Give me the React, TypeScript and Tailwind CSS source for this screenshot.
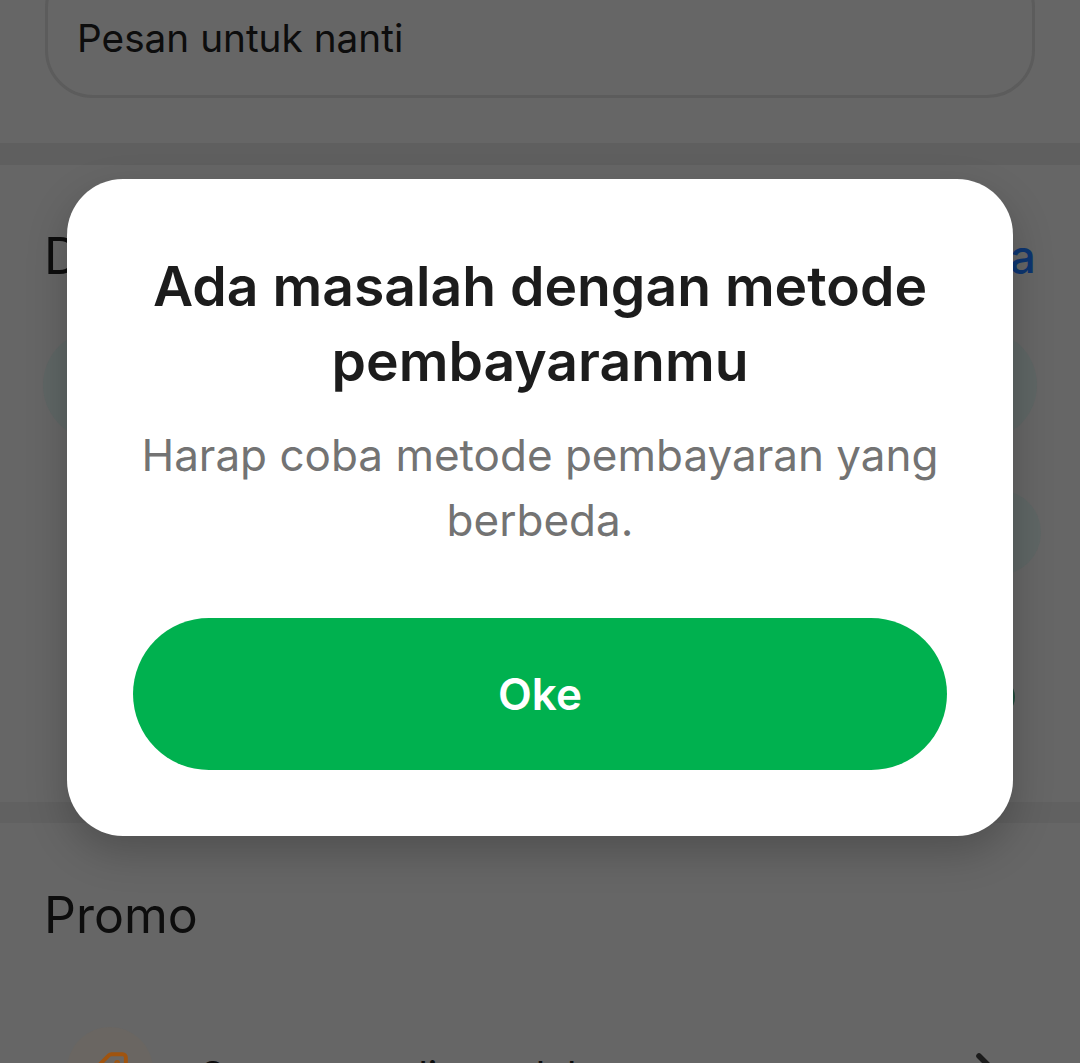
import { ChevronRight, Tag } from "lucide-react";

export default function App() {
  return (
    <div className="relative h-[1063px] w-[1080px] overflow-hidden bg-[#666666] font-['Inter',sans-serif] text-[#0d0d0d]">
      <div className="flex flex-col">
        <div className="mx-[45px] mt-[-40px] flex h-[138px] items-start rounded-[48px] border-[3px] border-[#5c5c5c] px-[29px] pt-[50px]">
          <span className="text-[38.75px] leading-[50px]">Pesan untuk nanti</span>
        </div>
        <div className="mt-[45px] h-[22px] bg-[#5f5f5f]" />
        <div className="flex items-center justify-between px-[44px] pt-[63px]">
          <span className="text-[50px] leading-[56px]">Daftar Metode</span>
          <span className="text-[46px] font-medium leading-[56px] text-[#0d3570]">Lihat semua</span>
        </div>
        <div className="mx-[43px] mt-[46px] h-[110px] rounded-[55px] bg-[#5f6665]" />
        <div className="mt-[50px] flex h-[85px] justify-end pr-[39px]">
          <div className="size-[85px] rounded-full bg-[#5f6665]" />
        </div>
        <div className="mt-[101px] flex h-[42px] justify-end pr-[65px]">
          <div className="size-[42px] rounded-full bg-[#1f4a3a]" />
        </div>
        <div className="mt-[84px] h-[21px] bg-[#616161]" />
        <div className="px-[44px] pt-[64px]">
          <span className="block text-[50px] leading-[56px]">Promo</span>
        </div>
        <div className="mt-[84px] flex items-start pl-[67px] pr-[66px]">
          <div className="flex size-[86px] shrink-0 items-center justify-center rounded-full bg-[#6a6662]">
            <Tag className="rotate-90 text-[#a0540f]" size={38} strokeWidth={2.5} />
          </div>
          <span className="ml-[47px] mt-[24px] flex-1 text-[39px] leading-[50px]">Semuanya disana lalu</span>
          <ChevronRight className="mt-[15px] text-[#1c1c1c]" size={56} strokeWidth={2.4} />
        </div>
      </div>

      <div className="absolute inset-0 flex justify-center pt-[179px]">
        <div className="flex h-[657px] w-[946px] flex-col rounded-[56px] bg-white px-[66px] shadow-[0_16px_40px_rgba(0,0,0,0.22)]">
          <h1 className="mt-[69px] text-center text-[55.25px] font-semibold leading-[75px] text-[#1c1c1c]">
            Ada masalah dengan metode pembayaranmu
          </h1>
          <p className="mt-[25px] text-center text-[44px] leading-[65px] text-[#737373]">
            Harap coba metode pembayaran yang berbeda.
          </p>
          <button className="mt-[65px] flex h-[152px] items-center justify-center rounded-full bg-[#00b14f] text-[44px] font-semibold text-white">
            Oke
          </button>
        </div>
      </div>
    </div>
  );
}
